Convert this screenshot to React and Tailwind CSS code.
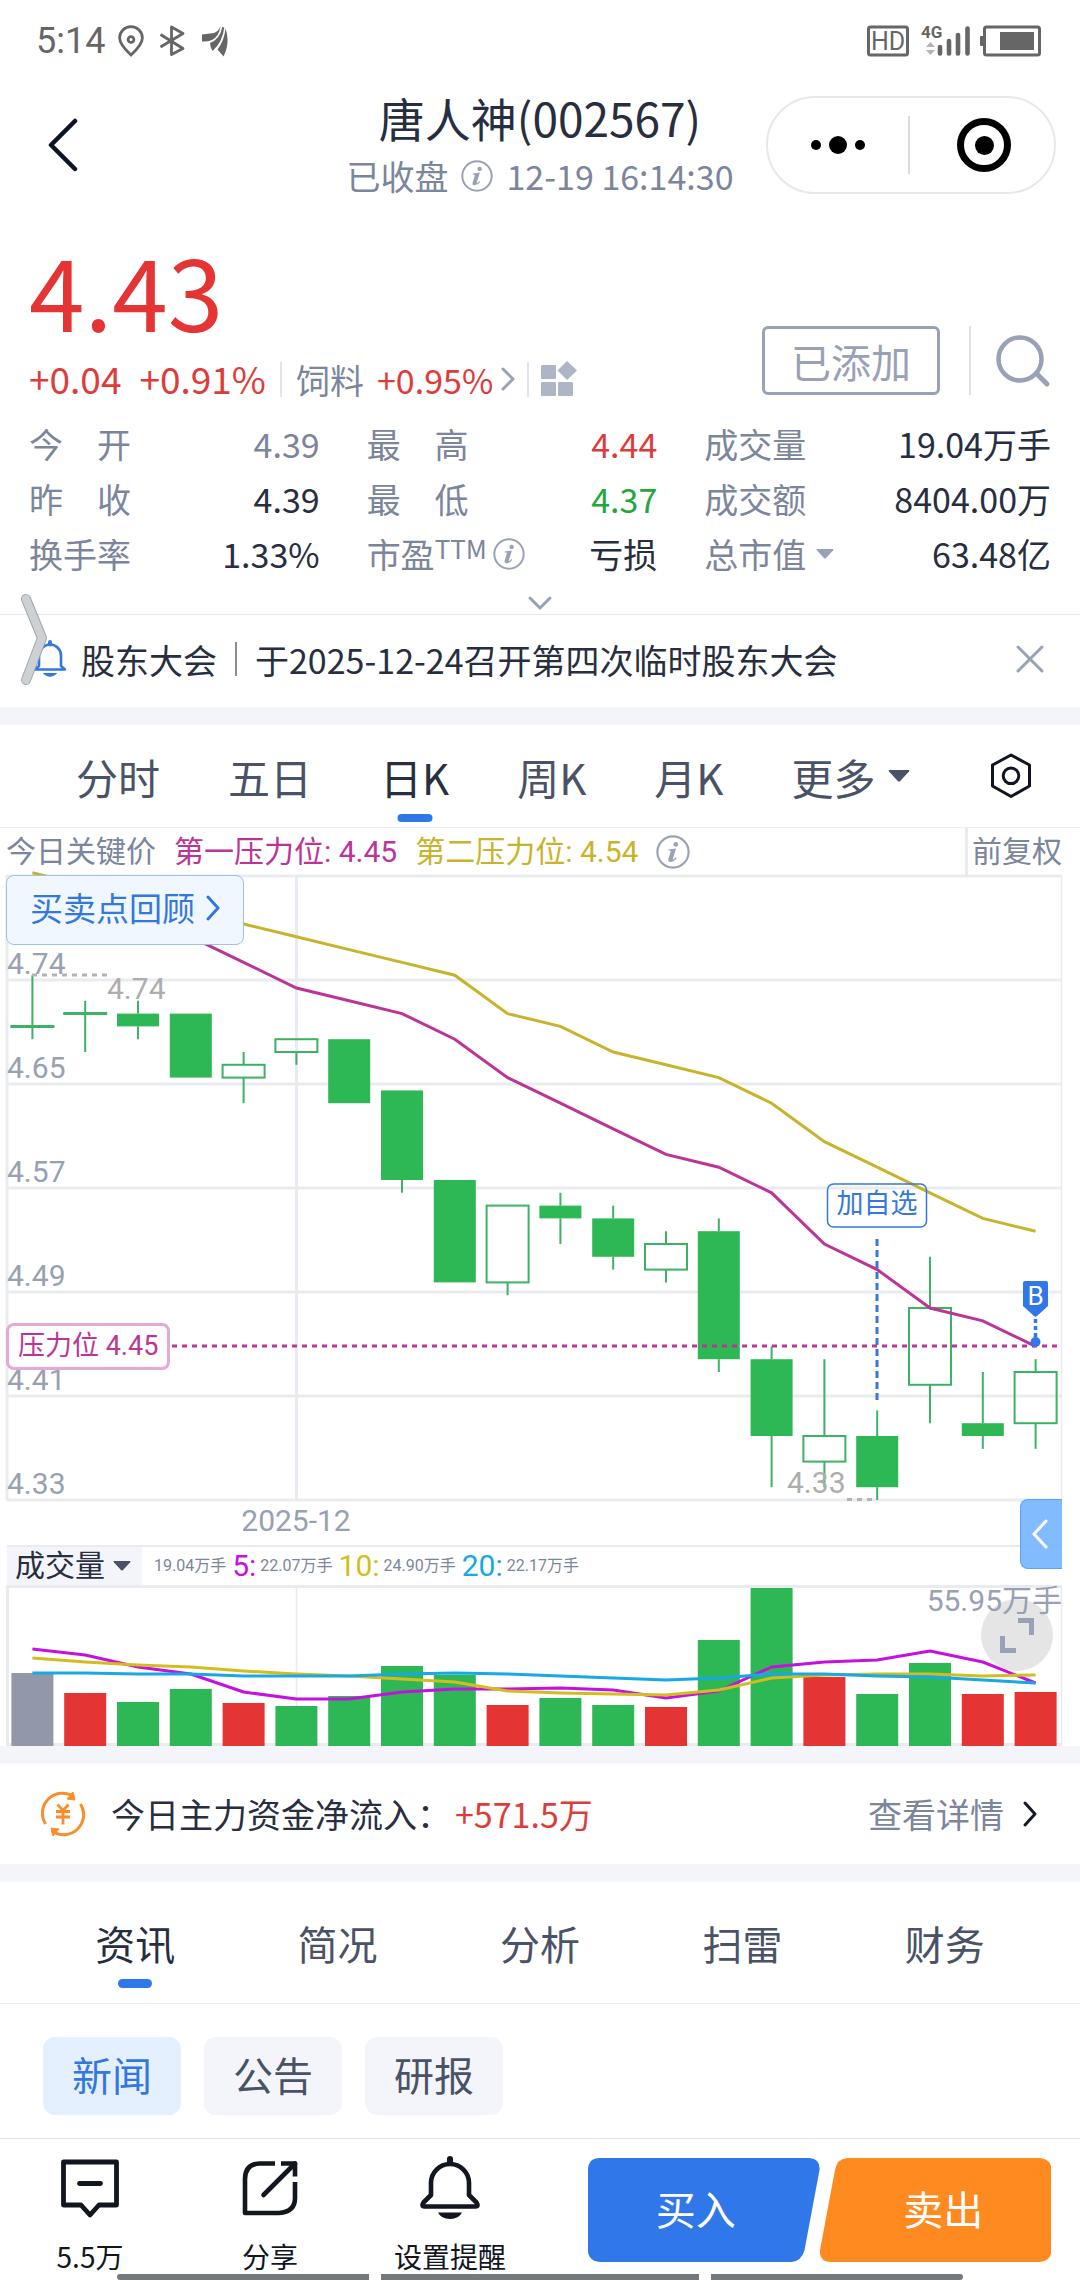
import React, { useState } from "react";

const UP = "#e43534";
const DOWN = "#2eb855";
const GREY = "#9297aa";

// [open, close, high, low]
const candles = [
    [4.70, 4.70, 4.74, 4.69],
    [4.71, 4.71, 4.72, 4.68],
    [4.71, 4.70, 4.72, 4.69],
    [4.71, 4.66, 4.71, 4.66],
    [4.66, 4.67, 4.68, 4.64],
    [4.68, 4.69, 4.69, 4.67],
    [4.69, 4.64, 4.69, 4.64],
    [4.65, 4.58, 4.65, 4.57],
    [4.58, 4.50, 4.58, 4.50],
    [4.50, 4.56, 4.56, 4.49],
    [4.56, 4.55, 4.57, 4.53],
    [4.55, 4.52, 4.56, 4.51],
    [4.51, 4.53, 4.54, 4.50],
    [4.54, 4.44, 4.55, 4.43],
    [4.44, 4.38, 4.45, 4.34],
    [4.36, 4.38, 4.44, 4.34],
    [4.38, 4.34, 4.40, 4.33],
    [4.42, 4.48, 4.52, 4.39],
    [4.39, 4.38, 4.43, 4.37],
    [4.39, 4.43, 4.44, 4.37],
];

const firstPressure = [null, null, null, 4.77, 4.75, 4.73, 4.72, 4.71, 4.69, 4.66, 4.64, 4.62, 4.60, 4.59, 4.57, 4.53, 4.51, 4.48, 4.47, 4.45];
const secondPressure = [4.82, 4.81, 4.80, 4.79, 4.78, 4.77, 4.76, 4.75, 4.74, 4.71, 4.70, 4.68, 4.67, 4.66, 4.64, 4.61, 4.59, 4.57, 4.55, 4.54];

const volumes = [
    [73, GREY], [53, UP], [44, DOWN], [57, DOWN], [43, UP],
    [40, DOWN], [50, DOWN], [80, DOWN], [71, DOWN], [41, UP],
    [48, DOWN], [41, DOWN], [39, UP], [106, DOWN], [158, DOWN],
    [69, UP], [52, DOWN], [83, DOWN], [52, UP], [54, UP],
];
const ma5 = [97, 91, 79, 72, 54, 47, 47, 54, 57, 57, 58, 56, 48, 55, 79, 84, 86, 95, 84, 63];
const ma10 = [88, 84, 81, 79, 75, 72, 70, 67, 64, 55, 53, 52, 51, 56, 68, 71, 72, 72, 70, 71];
const ma20 = [73, 73, 72, 72, 70, 70, 70, 72, 73, 72, 70, 68, 66, 68, 72, 72, 70, 69, 66, 63];

const gridLabels = ["4.74", "4.65", "4.57", "4.49", "4.41", "4.33"];

const xAt = (i) => 25.4 + i * 52.8;
const yAt = (price) => 625 - (price - 4.33) * 1280;
const volY = (v) => 161 - v;
const toPoints = (list, y) =>
    list.map((v, i) => (v === null ? null : `${xAt(i).toFixed(1)},${y(v).toFixed(1)}`)).filter(Boolean).join(" ");

const InfoIcon = ({ className }) => (
    <svg viewBox="0 0 32 32" className={className} fill="none" aria-hidden="true">
        <circle cx="16" cy="16" r="14.7" stroke="currentColor" strokeWidth="2" />
        <circle cx="18.6" cy="8.9" r="2.2" fill="currentColor" />
        <path d="M11.8 13.6 L18.9 12.6 L15.9 22.3 Q15.6 23.5 16.4 23.1 L18.6 21 L19.4 21.8 Q16.5 25.5 13.4 25.3 Q11 25 11.7 22.4 L13.8 15.6 Q14 14.6 13 14.6 L11.7 14.6 Z" fill="currentColor" />
    </svg>
);

const Chevron = ({ d, box, className, width = 3 }) => (
    <svg viewBox={box} className={className} fill="none" stroke="currentColor" strokeWidth={width} strokeLinecap="round" strokeLinejoin="round" aria-hidden="true">
        <path d={d} />
    </svg>
);

const Caret = ({ className }) => (
    <svg viewBox="0 0 22 12" className={className} aria-hidden="true">
        <path d="M1.5 0 H20.5 Q22 0 21 1.4 L12 11.2 Q11 12 10 11.2 L1 1.4 Q0 0 1.5 0 Z" fill="currentColor" />
    </svg>
);

const StatusBar = () => (
    <div className="flex h-[82px] items-center justify-between pr-[39px] pl-9 text-[#666]">
        <div className="flex items-center">
            <span className="w-[70px] font-['Roboto',sans-serif] text-[36px] leading-10">5:14</span>
            <svg viewBox="0 0 26 32" className="ml-3 h-8 w-[26px]" fill="none" stroke="currentColor" strokeWidth="2.8">
                <path d="M13 30 Q1.6 19.5 1.6 12.8 A11.4 11.2 0 0 1 24.4 12.8 Q24.4 19.5 13 30 Z" />
                <circle cx="13" cy="14.5" r="2.9" />
            </svg>
            <svg viewBox="0 0 26 32" className="ml-[15px] h-8 w-[26px]" fill="none" stroke="currentColor" strokeWidth="2.8" strokeLinejoin="round">
                <path d="M1.5 9.5 L24 23.5 L12.5 29.5 V2 L24 8.5 L1.5 22" />
            </svg>
            <svg viewBox="0 0 28 32" className="ml-4 h-8 w-7" fill="currentColor">
                <path d="M1 9.5 L13 8 Q17 6.5 19.5 1.5 Q18 11.5 11 15 Q6 17 1 16.5 Z" />
                <path d="M9 18 Q19 14 21.3 2 L23.3 2.4 Q21.5 17 11.5 26 Q9 22 9 18 Z" />
                <path d="M24.5 3.5 Q29.5 17 22.5 31.5 L16.5 24.5 Q23.5 15 24.5 3.5 Z" />
            </svg>
        </div>
        <div className="flex items-center">
            <svg viewBox="0 0 42 32" className="h-8 w-[42px] overflow-visible" aria-label="HD">
                <rect x="1.5" y="2" width="39" height="28" rx="2" fill="none" stroke="currentColor" strokeWidth="3" />
                <text x="21" y="25" textAnchor="middle" fill="currentColor" className="font-['Roboto',sans-serif] text-[25px]">HD</text>
            </svg>
            <svg viewBox="0 0 50 32" className="ml-3 h-8 w-[50px] overflow-visible" aria-label="4G">
                <text x="0" y="13" fill="currentColor" className="font-['Roboto',sans-serif] text-[17px] font-bold">4G</text>
                <path d="M5 22 L9.5 17 L14 22 Z M5 25 H14 L9.5 30 Z" fill="#b3b3b3" />
                <path d="M19 22 V28.5 M28 16 V28.5 M37 10 V28.5 M46.5 3.5 V28.5" stroke="currentColor" strokeWidth="4.6" strokeLinecap="round" />
            </svg>
            <svg viewBox="0 0 62 32" className="ml-2 h-8 w-[62px]">
                <rect x="5.5" y="2" width="55" height="28" rx="2" fill="none" stroke="currentColor" strokeWidth="3" />
                <rect x="1" y="11" width="4" height="10" rx="1" fill="currentColor" />
                <rect x="21" y="7" width="34" height="18" fill="currentColor" />
            </svg>
        </div>
    </div>
);

const Header = () => (
    <header className="relative flex h-[126px] items-center justify-center">
        <button aria-label="返回" className="absolute left-[46px] text-[#0c1426]">
            <Chevron box="0 0 34 54" d="M29 3 L5 27 L29 51" width={4.5} className="h-[54px] w-[34px]" />
        </button>
        <div className="flex flex-col items-center pt-1">
            <h1 className="text-[46px] leading-[58px] text-[#272e3f]">唐人神(002567)</h1>
            <div className="flex items-center text-[34px] leading-[60px] text-[#7b859b]">
                <span>已收盘</span>
                <InfoIcon className="mx-[13px] size-8 text-[#98a1b5]" />
                <span>12-19 16:14:30</span>
            </div>
        </div>
        <div className="absolute right-6 flex h-[98px] w-[290px] items-center rounded-full border-2 border-[#e8e8e8]">
            <button aria-label="更多" className="flex flex-1 items-center justify-center gap-2">
                <span className="size-[10px] rounded-full bg-black"></span>
                <span className="size-[18px] rounded-full bg-black"></span>
                <span className="size-[10px] rounded-full bg-black"></span>
            </button>
            <span className="h-[58px] w-[2px] bg-[#dcdcdc]"></span>
            <button aria-label="关闭" className="flex flex-1 items-center justify-center pl-1">
                <span className="flex size-[54px] items-center justify-center rounded-full border-[7px] border-black">
                    <span className="size-[19px] rounded-full bg-black"></span>
                </span>
            </button>
        </div>
    </header>
);

const Stat = ({ label, value, color = "text-[#272e3f]" }) => (
    <div className="flex items-center justify-between">
        <dt className="flex items-center whitespace-pre text-[#7b859b]">{label}</dt>
        <dd className={color}>{value}</dd>
    </div>
);

const Quote = () => (
    <section>
        <div className="flex items-end justify-between pt-[29px] pr-[29px] pl-[29px]">
            <div>
                <div className="text-[100px] leading-[104px] text-[#e43534]">4.43</div>
                <div className="mt-[18px] flex h-10 items-center text-[34px] text-[#7b859b]">
                    <span className="text-[37px] text-[#dc3d3b]">+0.04</span>
                    <span className="ml-[18px] text-[37px] text-[#dc3d3b]">+0.91%</span>
                    <span className="mx-[14px] h-[35px] w-[2px] bg-[#e1e4ea]"></span>
                    <a href="#sector" className="flex items-center">
                        饲料<span className="ml-[13px] text-[#dc3d3b]">+0.95%</span>
                        <Chevron box="0 0 14 24" d="M2 2 L12 12 L2 22" className="ml-2 h-6 w-[14px] text-[#98a1b5]" />
                    </a>
                    <span className="mx-3 h-[35px] w-[2px] bg-[#e1e4ea]"></span>
                    <button aria-label="板块">
                        <svg viewBox="0 0 36 36" className="size-9 text-[#adb5c6]" fill="currentColor">
                            <rect x="0" y="4" width="15" height="14" rx="1" />
                            <rect x="0" y="21" width="15" height="14" rx="1" />
                            <rect x="17" y="21" width="15" height="14" rx="1" />
                            <path d="M26 0 L36 9.5 L26 19 L16.5 9.5 Z" />
                        </svg>
                    </button>
                </div>
            </div>
            <div className="mb-1 flex items-center">
                <button className="h-[69px] w-[178px] rounded-md border-3 border-[#98a1b5] text-[40px] leading-[60px] text-[#98a1b5]">已添加</button>
                <span className="mr-6 ml-[29px] h-[69px] w-[2px] bg-[#dfe2e8]"></span>
                <button aria-label="搜索">
                    <svg viewBox="0 0 56 54" className="h-[54px] w-14 text-[#98a1b5]" fill="none" stroke="currentColor" strokeLinecap="round">
                        <circle cx="25" cy="25" r="21.5" strokeWidth="4.5" />
                        <path d="M42 40 L52 50" strokeWidth="5" />
                    </svg>
                </button>
            </div>
        </div>
        <dl className="mt-[17px] grid auto-rows-[55px] grid-cols-[290fr_290fr_346fr] gap-x-[47px] pr-[29px] pl-[29px] text-[34px] leading-[54px]">
            <Stat label="今　开" value="4.39" color="text-[#7b859b]" />
            <Stat label="最　高" value="4.44" color="text-[#dc3d3b]" />
            <Stat label="成交量" value="19.04万手" />
            <Stat label="昨　收" value="4.39" />
            <Stat label="最　低" value="4.37" color="text-[#23a63e]" />
            <Stat label="成交额" value="8404.00万" />
            <Stat label="换手率" value="1.33%" />
            <Stat
                label={<>市盈<span className="self-start text-[26px] leading-[42px]">TTM</span><InfoIcon className="ml-[6px] size-8 text-[#98a1b5]" /></>}
                value="亏损"
            />
            <Stat label={<>总市值<Caret className="ml-[10px] h-3 w-[18px] text-[#98a1b5]" /></>} value="63.48亿" />
        </dl>
        <button aria-label="展开" className="flex h-[33px] w-full items-center justify-center pt-[10px] text-[#98a1b5]">
            <Chevron box="0 0 24 14" d="M2 2 L12 12 L22 2" className="h-[14px] w-6" />
        </button>
    </section>
);

const Notice = () => (
    <section className="relative flex h-[93px] items-center border-t border-[#e8e9ec] pr-9 pb-1 pl-[33px] text-[34px] text-[#272e3f]">
        <svg viewBox="0 0 34 38" className="h-[38px] w-[34px] text-[#3477e0]" fill="none" stroke="currentColor" strokeWidth="2.6" strokeLinejoin="round">
            <path d="M6 26 V15.5 A11 11 0 0 1 28 15.5 V26 L32 29.5 H2 Z" />
            <path d="M17 4.5 V2" strokeWidth="4" strokeLinecap="round" />
            <path d="M10.5 33.5 H23.5 Q17 39 10.5 33.5 Z" fill="currentColor" strokeWidth="1" />
        </svg>
        <span className="ml-[14px]">股东大会</span>
        <span className="mx-[18px] h-[34px] w-[2px] bg-[#8a8f99]"></span>
        <span className="flex-1">于2025-12-24召开第四次临时股东大会</span>
        <button aria-label="关闭提醒">
            <Chevron box="0 0 28 28" d="M2 2 L26 26 M26 2 L2 26" className="size-7 text-[#98a1b5]" />
        </button>
        {/* edge handle floating over the notice */}
        <svg viewBox="0 0 30 96" className="absolute -top-[23px] left-5 h-[96px] w-[30px]" fill="none" strokeLinecap="round" strokeLinejoin="round">
            <path d="M6 7 L22 46 L6 88" stroke="#9a9d9f" strokeWidth="10" strokeOpacity="0.9" />
            <path d="M6 7 L22 46 L6 88" stroke="#cdd1d3" strokeWidth="8" />
        </svg>
    </section>
);

const periods = ["分时", "五日", "日K", "周K", "月K"];

const PeriodTabs = () => {
    const [active, setActive] = useState("日K");
    return (
        <nav className="flex h-[103px] items-center justify-between border-b border-[#eeeff2] pr-12 pl-[76px] text-[42px] text-[#495266]">
            <div className="flex h-full items-center gap-[68px]">
                {periods.map((p) => (
                    <button key={p} onClick={() => setActive(p)} className={`relative flex h-full items-center ${p === active ? "text-[#272e3f]" : ""}`}>
                        {p}
                        {p === active && <span className="absolute bottom-[5px] left-1/2 h-2 w-[35px] -translate-x-1/2 rounded-full bg-[#3077ea]"></span>}
                    </button>
                ))}
                <button className="flex items-center gap-[13px]">
                    更多<Caret className="h-3 w-[22px]" />
                </button>
            </div>
            <button aria-label="图表设置">
                <svg viewBox="0 0 42 46" className="h-[46px] w-[42px] text-[#0f1420]" fill="none" stroke="currentColor" strokeWidth="3" strokeLinejoin="round">
                    <path d="M21 2 L39.5 12 V33 L21 43.5 L2.5 33 V12 Z" />
                    <circle cx="21" cy="22.8" r="7.8" />
                </svg>
            </button>
        </nav>
    );
};

const KeyPrices = () => (
    <div className="mr-[18px] flex h-[47px] items-center pl-[6px] font-['Roboto','Noto_Sans_CJK_SC',sans-serif] text-[30px]">
        <span className="text-[#7b859b]">今日关键价</span>
        <span className="ml-[18px] text-[#bb3597]">第一压力位: 4.45</span>
        <span className="ml-[18px] text-[#c6b42a]">第二压力位: 4.54</span>
        <InfoIcon className="ml-[18px] size-[34px] text-[#98a1b5]" />
        <button className="ml-auto flex h-full items-center border-l-3 border-[#e9ebf0] pl-1 text-[#7b859b]">前复权</button>
    </div>
);

const Candle = ({ data, i }) => {
    const [open, close, high, low] = data;
    const x = xAt(i);
    const top = yAt(Math.max(open, close));
    const bottom = yAt(Math.min(open, close));
    const rising = close > open;
    return (
        <g stroke="#3cb265" strokeWidth="2">
            {top - yAt(high) > 1 && <line x1={x} x2={x} y1={yAt(high)} y2={top} />}
            {yAt(low) - bottom > 1 && <line x1={x} x2={x} y1={bottom} y2={yAt(low)} />}
            {open === close ? (
                <line x1={x - 22} x2={x + 22} y1={top} y2={top} strokeWidth="3" />
            ) : (
                <rect x={x - 21} y={top} width="42" height={bottom - top} fill={rising ? "none" : DOWN} stroke={rising ? "#3cb265" : "none"} />
            )}
        </g>
    );
};

const PriceChart = () => (
    <div className="relative mr-[18px] ml-[7px]">
        <svg viewBox="0 0 1055 670" className="block w-full overflow-visible font-['Roboto','Noto_Sans_CJK_SC',sans-serif] text-[30px]">
            <g stroke="#e9ebf0" strokeWidth="3">
                {[1, 105, 209, 313, 417, 521, 625].map((y) => (
                    <line key={y} x1="0" x2="1055" y1={y} y2={y} />
                ))}
                <line x1="0" x2="0" y1="0" y2="625" />
                <line x1="289.5" x2="289.5" y1="0" y2="625" />
                <line x1="1054.5" x2="1054.5" y1="0" y2="625" strokeWidth="1.5" />
            </g>
            {gridLabels.map((label, i) => (
                <text key={label} x="0" y={99 + i * 104} fill="#98a0b3">{label}</text>
            ))}
            {candles.map((c, i) => (
                <Candle key={i} data={c} i={i} />
            ))}
            <line x1="25" x2="101" y1="100" y2="100" stroke="#b3b3b3" strokeWidth="3" strokeDasharray="5 5" />
            <text x="100" y="124" fill="#adadad">4.74</text>
            <line x1="840" x2="868" y1="624.5" y2="624.5" stroke="#b3b3b3" strokeWidth="3" strokeDasharray="5 5" />
            <text x="780" y="618" fill="#adadad">4.33</text>
            <line x1="870" x2="870" y1="364" y2="528" stroke="#3578dd" strokeWidth="3" strokeDasharray="7 4" />
            <polyline points={toPoints(secondPressure, yAt)} fill="none" stroke="#c6b42a" strokeWidth="3" />
            <polyline points={toPoints(firstPressure, yAt)} fill="none" stroke="#bb3597" strokeWidth="3" />
            <line x1="165" x2="1055" y1="471" y2="471" stroke="#bb3597" strokeWidth="3" strokeDasharray="5 5" />
            {/* added-to-watchlist marker */}
            <rect x="820.5" y="309" width="99" height="43" rx="6" fill="none" stroke="#3578dd" strokeWidth="1.5" />
            <text x="870" y="338" textAnchor="middle" fill="#3578dd" className="text-[27px]">加自选</text>
            {/* buy point marker */}
            <path d="M1018 406 H1039 Q1041 406 1041 408 V431 L1030 441 Q1028.5 442.5 1027 441 L1016 431 V408 Q1016 406 1018 406 Z" fill="#3077ea" />
            <text x="1028.5" y="430" textAnchor="middle" fill="#fff" className="text-[26px]">B</text>
            <line x1="1028.5" x2="1028.5" y1="444" y2="462" stroke="#3578dd" strokeWidth="3.5" strokeDasharray="4 3" />
            <circle cx="1028.5" cy="467" r="5" fill="#3077ea" />
            <text x="289" y="656" textAnchor="middle" fill="#98a0b3">2025-12</text>
        </svg>
        <button className="absolute top-0 -left-px flex h-[70px] items-center rounded-lg border border-[#9dc0f0] bg-[#f0f7ff] pr-[22px] pb-1 pl-[23px] text-[33px] text-[#3477dd]">
            买卖点回顾
            <Chevron box="0 0 16 26" d="M3 2 L13 13 L3 24" className="ml-[10px] h-[26px] w-4" />
        </button>
        <div className="absolute top-[448px] -left-px flex h-[47px] items-center rounded-lg border-3 border-[#e3a9d7] bg-white px-[9px] font-['Roboto','Noto_Sans_CJK_SC',sans-serif] text-[27px] text-[#bb3597]">
            压力位 4.45
        </div>
        <button aria-label="收起" className="absolute top-[624px] right-0 z-10 flex h-[70px] w-[42px] items-center justify-center rounded-l-lg border border-r-0 border-[#5ba3f5] bg-[#74b5ff]/90 pr-1 text-white">
            <Chevron box="0 0 18 30" d="M15 2 L3 15 L15 28" className="h-[30px] w-[18px]" />
        </button>
    </div>
);

const legend = [
    { label: "5:", color: "text-[#c511e0]", value: "22.07万手" },
    { label: "10:", color: "text-[#d3bd1e]", value: "24.90万手" },
    { label: "20:", color: "text-[#17a8e6]", value: "22.17万手" },
];

const VolumeHeader = () => (
    <div className="mr-[18px] ml-[7px] flex h-10 items-center border-t-2 border-[#e9ebf0] font-['Roboto','Noto_Sans_CJK_SC',sans-serif] text-[30px] leading-[38px]">
        <button className="flex h-full w-[135px] items-center gap-2 bg-[#f4f5fa] pl-2 text-[#272e3f]">
            成交量<Caret className="h-3 w-[18px] text-[#495266]" />
        </button>
        <span className="ml-3 text-[16px] text-[#7b859b]">19.04万手</span>
        {legend.map((item) => (
            <span key={item.label} className="ml-[6px] flex items-center">
                <span className={item.color}>{item.label}</span>
                <span className="ml-1 text-[16px] text-[#7b859b]">{item.value}</span>
            </span>
        ))}
    </div>
);

const VolumeChart = () => (
    <div className="mr-[18px] ml-[7px]">
        <svg viewBox="0 0 1055 161" className="block w-full overflow-visible font-['Roboto','Noto_Sans_CJK_SC',sans-serif] text-[30px]">
            <path d="M0 1.5 H1055 M0 159.5 H1055 M0.5 0 V161" stroke="#e9ebf0" strokeWidth="3" />
            <path d="M289.5 0 V161 M1054.5 0 V161" stroke="#e9ebf0" strokeWidth="1.5" />
            {volumes.map(([h, color], i) => (
                <rect key={i} x={xAt(i) - 21} y={volY(h)} width="42" height={h} fill={color} />
            ))}
            <circle cx="1010" cy="50" r="36" fill="#e5e5e5" />
            <g fill="none" strokeWidth="3" strokeLinejoin="round">
                <polyline points={toPoints(ma5, volY)} stroke="#c511e0" />
                <polyline points={toPoints(ma10, volY)} stroke="#d3bd1e" />
                <polyline points={toPoints(ma20, volY)} stroke="#17a8e6" />
            </g>
            <path d="M1011 35.5 H1024.5 V50 M995.5 51 V65.5 H1009" fill="none" stroke="#98a1b5" strokeWidth="5" />
            <text x="1055" y="26" textAnchor="end" fill="#98a0b3">55.95万手</text>
        </svg>
    </div>
);

const MoneyFlow = () => (
    <section className="flex h-[101px] items-center pr-[42px] pl-[41px] text-[34px]">
        <svg viewBox="0 0 44 48" className="h-12 w-11 text-[#fb8c2c]" fill="none" stroke="currentColor" strokeWidth="3">
            <path d="M4.5 34 A20 20 0 0 1 33 7" />
            <path d="M39.5 14 A20 20 0 0 1 11 41" />
            <path d="M32 2 L34 10 L26 9 Z M12 46 L10 38 L18 39 Z" fill="currentColor" strokeWidth="1" />
            <path d="M16.5 14.5 L22 20.5 L27.5 14.5 M15 21.5 H29 M15 27 H29 M22 21 V34.5" strokeWidth="2.8" />
        </svg>
        <span className="ml-[26px] text-[#272e3f]">今日主力资金净流入：</span>
        <span className="ml-1 text-[#dc3d3b]">+571.5万</span>
        <a href="#flow" className="ml-auto flex items-center text-[#7b859b]">
            查看详情
            <Chevron box="0 0 16 28" d="M3 3 L13 14 L3 25" className="ml-[18px] h-7 w-4 text-[#151a26]" />
        </a>
    </section>
);

const InfoTabs = () => {
    const [active, setActive] = useState("资讯");
    return (
        <nav className="flex h-[122px] border-b border-[#eeeff2] px-[34px] text-[40px] text-[#495266]">
            {["资讯", "简况", "分析", "扫雷", "财务"].map((t) => (
                <button key={t} onClick={() => setActive(t)} className={`relative flex flex-1 items-center justify-center ${t === active ? "text-[#272e3f]" : ""}`}>
                    {t}
                    {t === active && <span className="absolute bottom-[15px] h-[9px] w-[34px] rounded-full bg-[#3077ea]"></span>}
                </button>
            ))}
        </nav>
    );
};

const NewsFilter = () => {
    const [active, setActive] = useState("新闻");
    return (
        <div className="flex gap-[23px] px-[43px] pt-[33px] pb-[23px] text-[40px]">
            {["新闻", "公告", "研报"].map((t) => (
                <button key={t} onClick={() => setActive(t)} className={`h-[78px] w-[138px] rounded-xl pb-1 ${t === active ? "bg-[#e5f0ff] text-[#3477dd]" : "bg-[#f4f5fa] text-[#495266]"}`}>
                    {t}
                </button>
            ))}
        </div>
    );
};

const BottomBar = () => (
    <footer className="relative mt-auto flex h-[142px] items-start border-t border-[#e6e7ea] bg-white pr-[29px] text-[28px] leading-10 text-[#12161f]">
        <button className="flex w-[180px] flex-col items-center gap-[13px] pt-4">
            <svg viewBox="0 0 64 68" className="h-[68px] w-16" fill="none" stroke="currentColor" strokeWidth="4.8" strokeLinejoin="round">
                <path d="M5.5 7 H58.5 V50 H41 L32 60 L23 50 H5.5 Z" />
                <path d="M21.5 28.5 H42.5" strokeLinecap="round" />
            </svg>
            <span>5.5万</span>
        </button>
        <button className="flex w-[180px] flex-col items-center gap-[13px] pt-4">
            <svg viewBox="0 0 64 68" className="h-[68px] w-16" fill="none" stroke="currentColor" strokeWidth="4.6" strokeLinejoin="round">
                <path d="M37 8.5 H22 Q7 9 7 24 V58 H41 Q57 57 57 43 V27" />
                <path d="M43 8.5 H57 V21.5" />
                <path d="M57 8.5 L25.5 40" strokeLinecap="round" />
            </svg>
            <span>分享</span>
        </button>
        <button className="flex w-[180px] flex-col items-center gap-[13px] pt-4">
            <svg viewBox="0 0 64 68" className="h-[68px] w-16" fill="none" stroke="currentColor" strokeWidth="4.6" strokeLinejoin="round">
                <path d="M13 40 V28 A19 19 0 0 1 51 28 V40 L58.5 47.5 Q61 51.5 57.5 51.5 H6.5 Q3 51.5 5.5 47.5 Z" />
                <path d="M32 8 V4" strokeWidth="6" strokeLinecap="round" />
                <path d="M20 57.5 H44 Q41 64 32 64 Q23 64 20 57.5 Z" fill="currentColor" stroke="none" />
            </svg>
            <span>设置提醒</span>
        </button>
        <div className="ml-12 flex flex-1 pt-[19px] text-[40px] text-white">
            <button className="relative h-[104px] flex-1 pr-4 pb-1">
                <svg viewBox="0 0 232 104" preserveAspectRatio="none" className="absolute inset-0 h-full w-full text-[#3077ea]">
                    <path d="M12 0 H222 Q233 1 232 12 L217 92 Q214 103 204 104 H12 Q0 103 0 92 V12 Q0 0 12 0 Z" fill="currentColor" />
                </svg>
                <span className="relative">买入</span>
            </button>
            <button className="relative h-[104px] flex-1 pb-1 pl-4">
                <svg viewBox="0 0 232 104" preserveAspectRatio="none" className="absolute inset-0 h-full w-full text-[#ff8a20]">
                    <path d="M27 0 H220 Q232 1 232 12 V92 Q232 103 220 104 H10 Q-1 103 0 92 L15 12 Q17 1 27 0 Z" fill="currentColor" />
                </svg>
                <span className="relative">卖出</span>
            </button>
        </div>
        {/* system gesture bar */}
        <div className="absolute inset-x-[117px] bottom-0 flex h-[6px] gap-3">
            <span className="flex-[252] rounded-l-full bg-[#75787d]"></span>
            <span className="flex-[318] bg-[#75787d]"></span>
            <span className="flex-[252] rounded-r-full bg-[#75787d]"></span>
        </div>
    </footer>
);

const Divider = ({ className }) => <div className={`bg-[#f4f5fa] ${className}`}></div>;

const App = () => {
    return (
        <div className="flex min-h-screen flex-col bg-white font-['Noto_Sans_CJK_SC',sans-serif]">
            <StatusBar />
            <Header />
            <Quote />
            <Notice />
            <Divider className="h-[18px]" />
            <PeriodTabs />
            <KeyPrices />
            <PriceChart />
            <VolumeHeader />
            <VolumeChart />
            <Divider className="h-[17px]" />
            <MoneyFlow />
            <Divider className="h-[18px]" />
            <InfoTabs />
            <NewsFilter />
            <BottomBar />
        </div>
    );
};

export default App;
